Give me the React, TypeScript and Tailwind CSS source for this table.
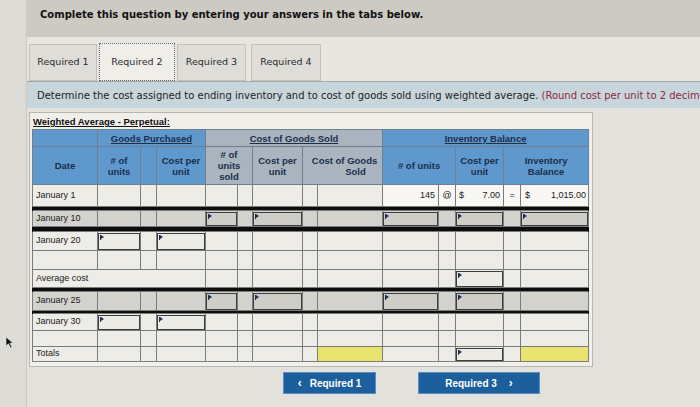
import React from "react";

type Key = "date" | "pu" | "pa" | "pc" | "su" | "sa" | "sc" | "se" | "cogs" | "iu" | "ia" | "ic" | "ie" | "ib";
const KEYS: Key[] = ["date", "pu", "pa", "pc", "su", "sa", "sc", "se", "cogs", "iu", "ia", "ic", "ie", "ib"];
const WIDTHS = [65, 43, 16, 49, 32, 15, 50, 15, 65, 56, 17, 48, 17, 68];

type Row = {
  kind: "row";
  label: string;
  h: number;
  gray?: boolean;
  inputs: Key[];
  labelSpan?: number;
  yellow?: Key[];
  first?: boolean;
};
type Sep = { kind: "sep"; h: number };

const ROWS: (Row | Sep)[] = [
  { kind: "row", label: "January 1", h: 22, inputs: [], first: true },
  { kind: "sep", h: 4 },
  { kind: "row", label: "January 10", h: 16, gray: true, inputs: ["su", "sc", "iu", "ic", "ib"] },
  { kind: "sep", h: 5 },
  { kind: "row", label: "January 20", h: 19, inputs: ["pu", "pc"] },
  { kind: "row", label: "", h: 19, inputs: [] },
  { kind: "row", label: "Average cost", h: 18, inputs: ["ic"], labelSpan: 4 },
  { kind: "sep", h: 4 },
  { kind: "row", label: "January 25", h: 19, gray: true, inputs: ["su", "sc", "iu", "ic"] },
  { kind: "sep", h: 3 },
  { kind: "row", label: "January 30", h: 17, inputs: ["pu", "pc"] },
  { kind: "row", label: "", h: 16, inputs: [] },
  { kind: "row", label: "Totals", h: 15, inputs: ["ic"], yellow: ["cogs", "ib"] },
];

function Flag() {
  return (
    <span className="absolute left-[1px] top-[1px] flex items-start">
      <span className="block w-[1px] h-[5px] bg-[#1c2f57]" />
      <span className="block w-0 h-0 border-t-[2px] border-b-[2px] border-l-[3px] border-t-transparent border-b-transparent border-l-[#1c2f57]" />
    </span>
  );
}

function InputBox({ h, bg }: { h: number; bg: string }) {
  return (
    <div className={`relative border border-[#3e3e3e] ${bg}`} style={{ height: h - 2 }}>
      <Flag />
    </div>
  );
}

function DataRow({ r }: { r: Row }) {
  const rowBg = r.gray ? "bg-[#d4d2cc]" : "bg-[#eeece6]";
  const cells: React.ReactNode[] = [];
  let i = 0;
  while (i < KEYS.length) {
    const k = KEYS[i];
    if (k === "date") {
      const span = r.labelSpan ?? 1;
      cells.push(
        <td
          key={k}
          colSpan={span}
          className="border border-[#7b7b7b] px-[3px] text-left align-middle text-[9px] text-[#1a1a1a] whitespace-nowrap overflow-hidden"
        >
          {r.label}
        </td>
      );
      i += span;
      continue;
    }
    if (r.first && ["iu", "ia", "ic", "ie", "ib"].includes(k)) {
      const txt: Record<string, React.ReactNode> = {
        iu: <span className="block text-right pr-[3px]">145</span>,
        ia: <span className="block text-center">@</span>,
        ic: (
          <span className="flex justify-between px-[3px]">
            <span>$</span>
            <span>7.00</span>
          </span>
        ),
        ie: <span className="block text-center">=</span>,
        ib: (
          <span className="flex justify-between pl-[4px] pr-[2px]">
            <span>$</span>
            <span>1,015.00</span>
          </span>
        ),
      };
      cells.push(
        <td key={k} className="border border-[#7b7b7b] bg-[#f8f7f3] text-[9px] text-[#1a1a1a] align-middle p-0">
          {txt[k]}
        </td>
      );
      i++;
      continue;
    }
    if (r.yellow?.includes(k)) {
      cells.push(<td key={k} className="border border-[#7b7b7b] bg-[#e9e36f] p-0" />);
      i++;
      continue;
    }
    if (r.inputs.includes(k)) {
      cells.push(
        <td key={k} className="border border-[#7b7b7b] p-0 align-middle">
          <InputBox h={r.h} bg={r.gray ? "bg-[#cfcdc7]" : "bg-[#ecebe5]"} />
        </td>
      );
      i++;
      continue;
    }
    cells.push(<td key={k} className="border border-[#7b7b7b] p-0" />);
    i++;
  }
  return (
    <tr className={rowBg} style={{ height: r.h }}>
      {cells}
    </tr>
  );
}

function Header() {
  const blue = "bg-[#5e98cd]";
  const gray = "bg-[#a9b4bf]";
  const th = "border border-[#6f7f8f] text-[9.5px] font-bold text-[#1b2f4b] text-center align-middle leading-[11px] p-0";
  return (
    <thead>
      <tr className="h-[17px]">
        <th className={`${th} ${blue}`} />
        <th colSpan={3} className={`${th} ${blue}`}>
          <span className="underline">Goods Purchased</span>
        </th>
        <th colSpan={5} className={`${th} ${gray}`}>
          <span className="underline">Cost of Goods Sold</span>
        </th>
        <th colSpan={5} className={`${th} ${blue}`}>
          <span className="underline">Inventory Balance</span>
        </th>
      </tr>
      <tr className="h-[38px]">
        <th className={`${th} ${blue}`}>Date</th>
        <th className={`${th} ${blue}`}>
          # of
          <br />
          units
        </th>
        <th className={`${th} ${blue}`} />
        <th className={`${th} ${blue}`}>
          Cost per
          <br />
          unit
        </th>
        <th colSpan={2} className={`${th} ${gray}`}>
          # of
          <br />
          units
          <br />
          sold
        </th>
        <th className={`${th} ${gray}`}>
          Cost per
          <br />
          unit
        </th>
        <th colSpan={2} className={`${th} ${gray}`}>
          <span className="block pl-[4px]">
            Cost of Goods
            <br />
            <span className="pl-[22px]">Sold</span>
          </span>
        </th>
        <th colSpan={2} className={`${th} ${blue}`}>
          # of units
        </th>
        <th className={`${th} ${blue}`}>
          Cost per
          <br />
          unit
        </th>
        <th colSpan={2} className={`${th} ${blue}`}>
          Inventory
          <br />
          Balance
        </th>
      </tr>
    </thead>
  );
}

function Tab({ label, w, active }: { label: string; w: number; active?: boolean }) {
  return (
    <div
      className={
        active
          ? "h-[38px] flex items-center justify-center text-[9.5px] text-[#2b2b2b] bg-[#f0eee9] border border-dotted border-[#6a6a6a]"
          : "h-[37px] flex items-center justify-center text-[9.5px] text-[#2b2b2b] bg-[#dfddd7] border border-[#c4c2bc]"
      }
      style={{ width: w }}
    >
      {label}
    </div>
  );
}

export default function App() {
  return (
    <div className="w-[700px] h-[407px] overflow-hidden bg-[#e3e1db] flex font-['DejaVu_Sans',sans-serif]">
      <div className="w-[27px] shrink-0 bg-[#dddbd5] border-r border-[#cbc9c3] relative">
        <svg className="absolute left-[5px] top-[336px]" width="9" height="13" viewBox="0 0 9 13">
          <path d="M1 1 L1 10 L3.5 7.8 L5.5 12 L7 11.3 L5 7.2 L8 7 Z" fill="#111" stroke="#eee" strokeWidth="0.6" />
        </svg>
      </div>
      <div className="flex-1 flex flex-col min-w-0">
        <div className="h-[37px] shrink-0 bg-[#cdcac3] pl-[13px] pt-[7px] text-[10px] font-bold text-[#111] whitespace-nowrap">
          Complete this question by entering your answers in the tabs below.
        </div>
        <div className="h-[45px] shrink-0 bg-[#e8e6e0] flex items-end gap-[2px] pl-[2px] border-b border-[#a9a7a1]">
          <Tab label="Required 1" w={68} />
          <Tab label="Required 2" w={76} active />
          <Tab label="Required 3" w={69} />
          <div className="w-[1px]" />
          <Tab label="Required 4" w={70} />
        </div>
        <div className="h-[26px] shrink-0 bg-[#c8d6dc] pl-[10px] flex items-center text-[10px] text-[#222] whitespace-nowrap overflow-hidden">
          Determine the cost assigned to ending inventory and to cost of goods sold using weighted average.&nbsp;
          <span className="text-[#8a2a3c]">(Round cost per unit to 2 decim</span>
        </div>
        <div className="mt-[4px] ml-[2px] w-[564px] bg-[#f1efea] border border-[#b8b6b0] px-[2px] pt-[1px] pb-[4px] font-['Liberation_Sans',Arial,sans-serif]">
          <div className="h-[15px] text-[9.5px] font-bold text-[#111] underline leading-[15px] pl-[1px]">
            Weighted Average - Perpetual:
          </div>
          <table className="table-fixed border-collapse w-[556px]">
            <colgroup>
              {WIDTHS.map((w, i) => (
                <col key={i} style={{ width: w }} />
              ))}
            </colgroup>
            <Header />
            <tbody>
              {ROWS.map((r, idx) =>
                r.kind === "sep" ? (
                  <tr key={idx} style={{ height: r.h }}>
                    <td colSpan={14} className="bg-[#0d0d0d] p-0 border-x border-[#0d0d0d]" />
                  </tr>
                ) : (
                  <DataRow key={idx} r={r} />
                )
              )}
            </tbody>
          </table>
        </div>
        <div className="mt-[5px] flex gap-[42px] pl-[256px] font-['Liberation_Sans',Arial,sans-serif]">
          <div className="w-[93px] h-[22px] bg-[#1b5f9c] border border-[#5c8fbf] flex items-center justify-center gap-[8px] text-white text-[10px] font-bold">
            <span className="text-[12px] leading-none">&lsaquo;</span>
            <span>Required 1</span>
          </div>
          <div className="w-[122px] h-[22px] bg-[#1b5f9c] border border-[#5c8fbf] flex items-center justify-center gap-[12px] text-white text-[10px] font-bold">
            <span>Required 3</span>
            <span className="text-[12px] leading-none">&rsaquo;</span>
          </div>
        </div>
      </div>
    </div>
  );
}
